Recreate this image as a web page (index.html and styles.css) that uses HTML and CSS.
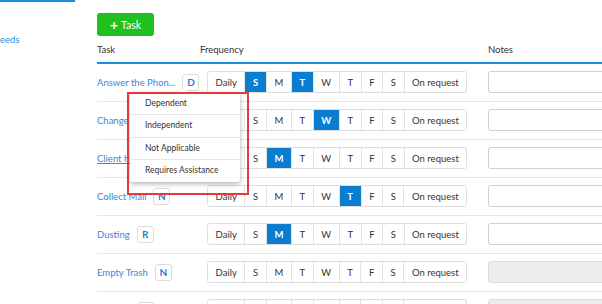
FILE: index.html
```html
<!DOCTYPE html>
<html lang="en">
<head>
  <meta charset="UTF-8">
  <meta name="viewport" content="width=device-width, initial-scale=1.0">
  <title>Tasks</title>
  <link rel="stylesheet" href="styles.css">
</head>
<body>
  <aside class="sidebar">
    <a class="side-link" href="#">eeds</a>
  </aside>

  <main class="content">
    <button class="add-btn"><span class="plus">+</span>Task</button>

    <div class="table">
      <div class="row head">
        <div>Task</div>
        <div>Frequency</div>
        <div>Notes</div>
      </div>

      <div class="row">
        <div class="task-cell">
          <a class="task-link" href="#">Answer the Phon...</a>
          <span class="badge">D</span>
          <div class="menu">
            <div class="menu-item">Dependent</div>
            <div class="menu-item">Independent</div>
            <div class="menu-item">Not Applicable</div>
            <div class="menu-item">Requires Assistance</div>
          </div>
          <div class="callout"></div>
        </div>
        <div class="freq-cell">
          <div class="freq">
            <span class="day">Daily</span><span class="day on">S</span><span class="day">M</span><span class="day on">T</span><span class="day">W</span><span class="day">T</span><span class="day">F</span><span class="day">S</span><span class="day">On request</span>
          </div>
        </div>
        <div class="notes-cell"><input class="notes" type="text"></div>
      </div>

      <div class="row">
        <div class="task-cell">
          <a class="task-link" href="#">Change Linens</a>
          <span class="badge">I</span>
        </div>
        <div class="freq-cell">
          <div class="freq">
            <span class="day">Daily</span><span class="day">S</span><span class="day">M</span><span class="day">T</span><span class="day on">W</span><span class="day">T</span><span class="day">F</span><span class="day">S</span><span class="day">On request</span>
          </div>
        </div>
        <div class="notes-cell"><input class="notes" type="text"></div>
      </div>

      <div class="row">
        <div class="task-cell">
          <a class="task-link hover" href="#">Client hygiene</a>
          <span class="badge">R</span>
        </div>
        <div class="freq-cell">
          <div class="freq">
            <span class="day">Daily</span><span class="day">S</span><span class="day on">M</span><span class="day">T</span><span class="day">W</span><span class="day">T</span><span class="day">F</span><span class="day">S</span><span class="day">On request</span>
          </div>
        </div>
        <div class="notes-cell"><input class="notes" type="text"></div>
      </div>

      <div class="row">
        <div class="task-cell">
          <a class="task-link" href="#">Collect Mail</a>
          <span class="badge">N</span>
        </div>
        <div class="freq-cell">
          <div class="freq">
            <span class="day">Daily</span><span class="day">S</span><span class="day">M</span><span class="day">T</span><span class="day">W</span><span class="day on">T</span><span class="day">F</span><span class="day">S</span><span class="day">On request</span>
          </div>
        </div>
        <div class="notes-cell"><input class="notes" type="text"></div>
      </div>

      <div class="row">
        <div class="task-cell">
          <a class="task-link" href="#">Dusting</a>
          <span class="badge">R</span>
        </div>
        <div class="freq-cell">
          <div class="freq">
            <span class="day">Daily</span><span class="day">S</span><span class="day on">M</span><span class="day">T</span><span class="day">W</span><span class="day">T</span><span class="day">F</span><span class="day">S</span><span class="day">On request</span>
          </div>
        </div>
        <div class="notes-cell"><input class="notes" type="text"></div>
      </div>

      <div class="row">
        <div class="task-cell">
          <a class="task-link" href="#">Empty Trash</a>
          <span class="badge">N</span>
        </div>
        <div class="freq-cell">
          <div class="freq">
            <span class="day">Daily</span><span class="day">S</span><span class="day">M</span><span class="day">T</span><span class="day">W</span><span class="day">T</span><span class="day">F</span><span class="day">S</span><span class="day">On request</span>
          </div>
        </div>
        <div class="notes-cell"><input class="notes" type="text" disabled></div>
      </div>

      <div class="row">
        <div class="task-cell">
          <a class="task-link" href="#">Laundry</a>
          <span class="badge">D</span>
        </div>
        <div class="freq-cell">
          <div class="freq">
            <span class="day">Daily</span><span class="day">S</span><span class="day">M</span><span class="day">T</span><span class="day">W</span><span class="day">T</span><span class="day">F</span><span class="day">S</span><span class="day">On request</span>
          </div>
        </div>
        <div class="notes-cell"><input class="notes" type="text" disabled></div>
      </div>
    </div>
  </main>
</body>
</html>
```

FILE: styles.css
```css
html, body {
  overflow: hidden;
}
body {
  margin: 0;
  display: flex;
  background-color: #fff;
  color: #333;
  font-family: Lato, "Open Sans", sans-serif;
  font-size: 9.5px;
}
.sidebar {
  width: 75px;
  flex: none;
  border-top: 2px solid #1b8ee0;
  padding-top: 32px;
}
.side-link {
  display: block;
  color: #2f8ad8;
  text-decoration: none;
  line-height: 12px;
}
.content {
  margin-left: 22px;
  padding-top: 13px;
  width: 600px;
  flex: none;
}
.add-btn {
  display: flex;
  align-items: center;
  justify-content: center;
  gap: 3px;
  width: 57px;
  height: 23px;
  padding: 0;
  border: none;
  border-radius: 3px;
  background-color: #20c020;
  color: #fff;
  font-family: Lato, sans-serif;
  font-size: 10.5px;
}
.plus {
  font-size: 14px;
  font-weight: bold;
  line-height: 1;
}
.row {
  display: grid;
  grid-template-columns: 103px 288px 1fr;
  align-items: center;
  padding: 7px 0 8px;
  border-bottom: 1px solid #e8e8e8;
}
.row.head {
  padding: 7px 0 5px;
  line-height: 14px;
  border-bottom: 2px solid #1b8fdd;
}
.task-cell {
  position: relative;
  display: flex;
  align-items: center;
  gap: 7px;
  height: 22px;
}
.task-link {
  color: #3589d6;
  text-decoration: none;
  white-space: nowrap;
}
.task-link.hover {
  text-decoration: underline;
}
.badge {
  display: flex;
  align-items: center;
  justify-content: center;
  width: 15px;
  height: 15px;
  border: 1px solid #dcdcdc;
  border-radius: 3px;
  color: #1f7fcf;
  font-size: 10px;
  font-weight: bold;
}
.freq {
  display: inline-flex;
  height: 20px;
  margin-left: 7px;
  border: 1px solid #dedede;
  border-radius: 3px;
}
.day {
  display: flex;
  align-items: center;
  padding: 0 7.6px;
  border-left: 1px solid #e2e2e2;
  white-space: nowrap;
}
.day:first-child {
  border-left: none;
}
.day.on {
  background-color: #0a7dd1;
  color: #fff;
  font-weight: bold;
}
.notes {
  display: block;
  width: 100%;
  height: 22px;
  box-sizing: border-box;
  border: 1px solid #cfcfcf;
  border-radius: 3px;
  background-color: #fff;
}
.notes:disabled {
  background-color: #ececec;
  border-color: #dcdcdc;
}
.menu {
  position: absolute;
  left: 33px;
  top: 21px;
  width: 110px;
  z-index: 2;
  padding-top: 1px;
  background-color: #fff;
  border-radius: 3px;
  box-shadow: 0 2px 5px rgba(0, 0, 0, 0.3);
}
.menu::before {
  content: "";
  position: absolute;
  left: 50px;
  top: -4px;
  border-left: 4px solid transparent;
  border-right: 4px solid transparent;
  border-bottom: 4px solid #fff;
}
.menu-item {
  height: 21.4px;
  line-height: 21.4px;
  padding-left: 15px;
  border-bottom: 1px solid #e6e6e6;
  font-size: 8.5px;
  color: #333;
}
.menu-item:last-child {
  border-bottom: none;
}
.callout {
  position: absolute;
  left: 30px;
  top: 21px;
  width: 118px;
  height: 99px;
  z-index: 3;
  border: 2px solid #e33b3b;
}
```
